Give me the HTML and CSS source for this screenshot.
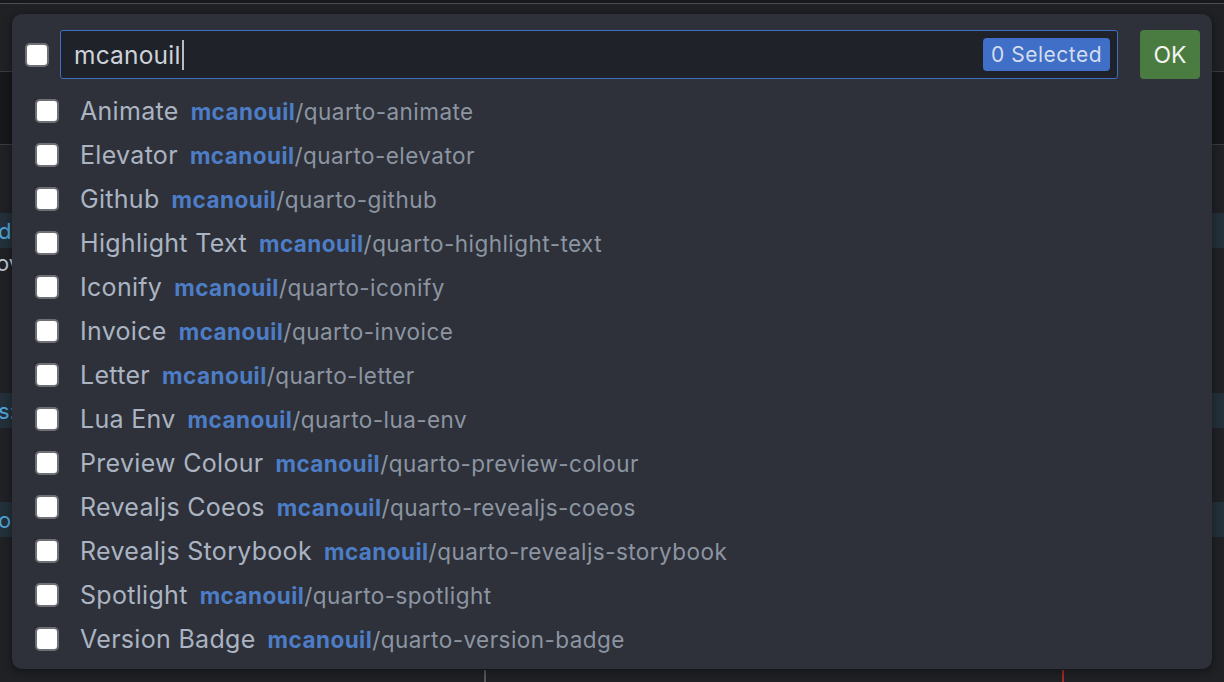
FILE: index.html
```html
<!DOCTYPE html>
<html lang="en">
<head>
<meta charset="utf-8">
<title>Quarto extensions picker</title>
<link rel="stylesheet" href="styles.css">
</head>
<body>
<div class="backdrop">
  <div class="bd-top"></div>
  <div class="bd-line"></div>
  <div class="bd-tabs"></div>
  <div class="bd-line2"></div>
  <div class="bd-bar"></div>
  <div class="bd-line2"></div>
  <div class="bd-editor">
    <div class="bd-gap g1"></div>
    <div class="bd-band b1"><span class="bd-txt">d</span></div>
    <div class="bd-row"><span class="bd-txt2">ov</span></div>
    <div class="bd-gap g2"></div>
    <div class="bd-band b2"><span class="bd-txt">s:</span></div>
    <div class="bd-gap g3"></div>
    <div class="bd-band b3"><span class="bd-txt">o</span></div>
    <div class="bd-fill"></div>
    <div class="bd-bottom">
      <div class="bd-vl grey"></div>
      <div class="bd-vl red"></div>
    </div>
  </div>
</div>

<div class="dialog">
  <div class="head">
    <span class="cb"></span>
    <div class="input">
      <span class="input-text">mcanouil</span><span class="caret"></span>
      <span class="badge">0 Selected</span>
    </div>
    <button class="ok">OK</button>
  </div>
  <ul class="list">
    <li class="row"><span class="cb"></span><span class="label">Animate</span><span class="repo"><b>mcanouil</b>/quarto-animate</span></li>
    <li class="row"><span class="cb"></span><span class="label">Elevator</span><span class="repo"><b>mcanouil</b>/quarto-elevator</span></li>
    <li class="row"><span class="cb"></span><span class="label">Github</span><span class="repo"><b>mcanouil</b>/quarto-github</span></li>
    <li class="row"><span class="cb"></span><span class="label">Highlight Text</span><span class="repo"><b>mcanouil</b>/quarto-highlight-text</span></li>
    <li class="row"><span class="cb"></span><span class="label">Iconify</span><span class="repo"><b>mcanouil</b>/quarto-iconify</span></li>
    <li class="row"><span class="cb"></span><span class="label">Invoice</span><span class="repo"><b>mcanouil</b>/quarto-invoice</span></li>
    <li class="row"><span class="cb"></span><span class="label">Letter</span><span class="repo"><b>mcanouil</b>/quarto-letter</span></li>
    <li class="row"><span class="cb"></span><span class="label">Lua Env</span><span class="repo"><b>mcanouil</b>/quarto-lua-env</span></li>
    <li class="row"><span class="cb"></span><span class="label">Preview Colour</span><span class="repo"><b>mcanouil</b>/quarto-preview-colour</span></li>
    <li class="row"><span class="cb"></span><span class="label">Revealjs Coeos</span><span class="repo"><b>mcanouil</b>/quarto-revealjs-coeos</span></li>
    <li class="row"><span class="cb"></span><span class="label">Revealjs Storybook</span><span class="repo"><b>mcanouil</b>/quarto-revealjs-storybook</span></li>
    <li class="row"><span class="cb"></span><span class="label">Spotlight</span><span class="repo"><b>mcanouil</b>/quarto-spotlight</span></li>
    <li class="row"><span class="cb"></span><span class="label">Version Badge</span><span class="repo"><b>mcanouil</b>/quarto-version-badge</span></li>
  </ul>
</div>
</body>
</html>
```

FILE: styles.css
```css
* { box-sizing: border-box; }
html, body { margin: 0; padding: 0; }
body {
  width: 1224px;
  height: 682px;
  overflow: hidden;
  background: #1f2125;
  font-family: Inter, "Noto Sans", "Liberation Sans", sans-serif;
  position: relative;
}

/* underlying app */
.backdrop { display: flex; flex-direction: column; height: 682px; }
.bd-top { height: 3px; background: #18191c; }
.bd-line { height: 1px; background: #4b4d52; }
.bd-tabs { height: 67px; background: #1f2125; }
.bd-line2 { height: 1px; background: #3a3c41; }
.bd-bar { height: 72px; background: #17181b; }
.bd-editor { flex: 1; display: flex; flex-direction: column; background: #1f2125; }
.bd-gap.g1 { height: 68px; }
.bd-gap.g2 { height: 115px; }
.bd-gap.g3 { height: 74px; }
.bd-band { height: 35px; background: #23303a; display: flex; align-items: center; }
.bd-row { height: 30px; display: flex; align-items: center; }
.bd-txt { color: #4fa3d9; font-size: 22px; margin-left: -2px; }
.bd-txt2 { color: #b9c7d6; font-size: 22px; margin-left: -4px; }
.bd-fill { flex: 1; }
.bd-bottom { height: 12px; display: flex; }
.bd-vl { width: 2px; height: 12px; }
.bd-vl.grey { background: #55575c; margin-left: 484px; }
.bd-vl.red { background: #a12b2b; margin-left: 576px; }

/* dialog */
.dialog {
  position: absolute;
  left: 12px;
  top: 14px;
  width: 1200px;
  height: 655px;
  background: #2e3139;
  border-radius: 10px;
  box-shadow: 0 2px 10px rgba(0,0,0,0.45);
  padding: 16px 12px 8px 13px;
}
.head { display: flex; align-items: center; height: 49px; }
.cb {
  flex: none;
  width: 24px;
  height: 24px;
  background: #ffffff;
  border: 2px solid #6f7075;
  border-radius: 5px;
}
.input {
  flex: 1;
  height: 49px;
  margin-left: 11px;
  background: #1f2228;
  border: 1.5px solid #3e6fc5;
  border-radius: 3px;
  display: flex;
  align-items: center;
  padding: 0 7px 0 13px;
}
.input-text { color: #cdd2da; font-size: 24.5px; letter-spacing: 0.2px; }
.caret { width: 2px; height: 30px; background: #b8bcc4; margin-left: 1px; }
.badge {
  margin-left: auto;
  height: 33px;
  display: flex;
  align-items: center;
  padding: 0 8px;
  background: #3f6fc6;
  color: #d3ddef;
  font-size: 21px;
  letter-spacing: 0.5px;
  border-radius: 4px;
}
.ok {
  flex: none;
  margin-left: 22px;
  width: 60px;
  height: 49px;
  border: none;
  border-radius: 4px;
  background: #4a7b41;
  color: #f2f4f1;
  font-family: inherit;
  font-size: 23px;
  padding: 0;
}

.list { list-style: none; margin: 10px 0 0 0; padding: 0 0 0 10px; }
.row { height: 44px; display: flex; align-items: center; }
.row .cb { margin-right: 21px; }
.label { color: #abb4c2; font-size: 25px; letter-spacing: 0.3px; }
.repo { color: #8c95a2; font-size: 22.5px; letter-spacing: 0.45px; margin-left: 12px; }
.repo b { color: #4c7dc6; font-weight: 700; }
```
